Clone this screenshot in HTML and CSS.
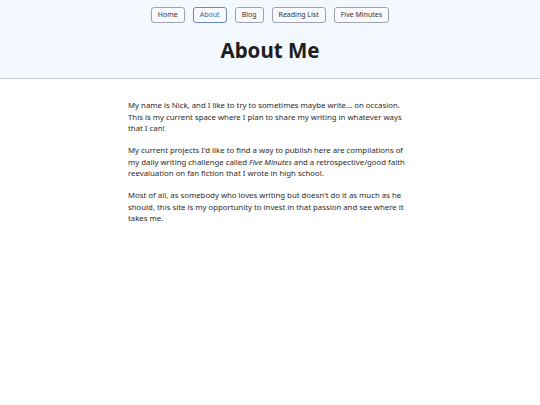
FILE: index.html
```html
<!DOCTYPE html>
<html>
<head>
<meta charset="utf-8">
<link rel="stylesheet" href="styles.css">
</head>
<body>
<header class="site-header">
  <nav class="nav">
    <a class="nav-btn" href="#">Home</a>
    <a class="nav-btn active" href="#">About</a>
    <a class="nav-btn" href="#">Blog</a>
    <a class="nav-btn" href="#">Reading List</a>
    <a class="nav-btn" href="#">Five Minutes</a>
  </nav>
  <h1 class="title">About Me</h1>
</header>
<main class="content">
  <p>My name is Nick, and I like to try to sometimes maybe write... on occasion. This is my current space where I plan to share my writing in whatever ways that I can!</p>
  <p>My current projects I'd like to find a way to publish here are compilations of my daily writing challenge called <em>Five Minutes</em> and a retrospective/good faith reevaluation on fan fiction that I wrote in high school.</p>
  <p>Most of all, as somebody who loves writing but doesn't do it as much as he should, this site is my opportunity to invest in that passion and see where it takes me.</p>
</main>
</body>
</html>
```
FILE: styles.css
```css
* { box-sizing: border-box; }
html, body { margin: 0; padding: 0; background: #fff; }
body {
  font-family: "Noto Sans", sans-serif;
  color: #222;
}
.site-header {
  background: #f3f7fe;
  border-bottom: 1px solid #c4c8d0;
  height: 79px;
  padding-top: 7px;
  display: flex;
  flex-direction: column;
  align-items: center;
}
.nav {
  display: flex;
  gap: 8px;
}
.nav-btn {
  display: block;
  font-size: 7px;
  line-height: 14px;
  padding: 0 6px;
  border: 1px solid #9ea3ab;
  border-radius: 3px;
  color: #333;
  text-decoration: none;
  background: #f8faff;
}
.nav-btn.active {
  border-color: #6d88bd;
  color: #4263a0;
}
.title {
  margin: 12px 0 0;
  font-size: 20.5px;
  line-height: 30px;
  font-weight: 700;
  color: #1e1e1e;
}
.content {
  width: 284px;
  margin: 0 auto;
  padding-top: 21px;
  font-size: 7.8px;
  line-height: 11.5px;
  color: #2a2a2a;
}
.content p { margin: 0 0 10.5px; }
```
